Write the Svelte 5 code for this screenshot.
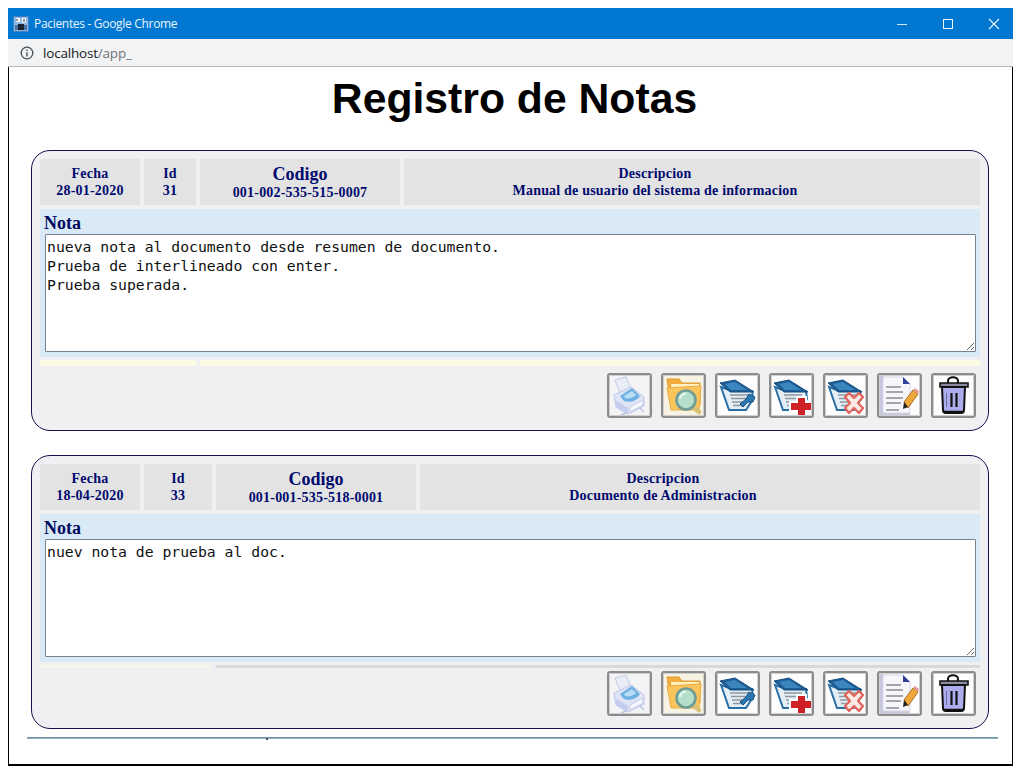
<script>
  const notas = [
    { cls: 'uno', fecha: '28-01-2020', id: '31', codigo: '001-002-535-515-0007', desc: 'Manual de usuario del sistema de informacion',
      texto: 'nueva nota al documento desde resumen de documento.\nPrueba de interlineado con enter.\nPrueba superada.' },
    { cls: 'dos', fecha: '18-04-2020', id: '33', codigo: '001-001-535-518-0001', desc: 'Documento de Administracion',
      texto: 'nuev nota de prueba al doc.' }
  ];
  const iconos = ['print', 'folder', 'book', 'add', 'del', 'doc', 'trash'];
</script>

{#snippet libro()}
  <path d="M4 12 L12 35 H29 L36 24 L35 16 L12 15 Z" fill="#e4eef6" stroke="#2a6ea6" stroke-width="2"/>
  <path d="M13 20 H31 M14 23.500 H30 M15 27 H27 M16 30.500 H25" stroke="#8f979f" stroke-width="1.500"/>
  <path d="M3 8 L18 5 L37 17 L13 17 Z" fill="#1c5f98" stroke="#174d7c"/>
  <path d="M8 9 L18 7 L30 15 L14 15 Z" fill="#3c86bf"/>
{/snippet}

{#snippet icono(tipo)}
  <svg viewBox="0 0 41 41" width="41" height="41">
    {#if tipo === 'print'}
      <path d="M6 5 L17 2 L22 14 L11 18 Z" fill="#e9edf8" stroke="#c4cce6"/>
      <path d="M5 20 L22 12 L35 22 L35 31 L19 39 L7 32 Z" fill="#dfe4f6" stroke="#bcc5e6"/>
      <path d="M11 21 L23 13 L31 21 C28 26 20 28 15 26 Z" fill="#6fb0e2"/>
      <path d="M15 21 L23 16 L27 20 C24 23 19 24 16 23 Z" fill="#b8dcf4"/>
      <path d="M6 25 L19 33 V39 L7 32 Z" fill="#c4cdee"/>
      <path d="M21 32 L34 25 V30 L21 37 Z" fill="#f6f8fd" stroke="#c6cde6"/>
      <path d="M17 38 L12 40 M31 33 L35 37" stroke="#b9c2e2" stroke-width="1.500"/>
    {:else if tipo === 'folder'}
      <path d="M4 4 H16 L19 8 H37 V30 H8 Z" fill="#f2ad3e" stroke="#dc9a2e"/>
      <path d="M8 9 H36 V18 H9 Z" fill="#fff0c0"/>
      <path d="M4 13 L38 11 L36 35 H8 Z" fill="#fbc55c" stroke="#e8ab42"/>
      <path d="M29 31 L36 37" stroke="#d8c078" stroke-width="4.500" stroke-linecap="round"/>
      <circle cx="23" cy="25" r="9.500" fill="#b5dfca" stroke="#6f9c94" stroke-width="2.600"/>
      <path d="M17 24 A6.500 6.500 0 0 1 23 18.500" fill="none" stroke="#e8f7ee" stroke-width="2"/>
    {:else if tipo === 'book'}
      {@render libro()}
      <path d="M23 29 L29 24 L32 19 L38 22 L36 27 L31 27 L26 32 Z" fill="#2b78b2" stroke="#174d7c"/>
    {:else if tipo === 'add'}
      {@render libro()}
      <path d="M25 21 H36 V26 H41 V37 H36 V41 H25 V37 H18 V26 H25 Z" fill="#fff"/>
      <path d="M27 23 H34 V28 H41 V35 H34 V41 H27 V35 H20 V28 H27 Z" fill="#cf1f27"/>
    {:else if tipo === 'del'}
      {@render libro()}
      <path d="M20 22 L24 18 L29 23 L34 18 L38 22 L33 28 L38 33 L34 38 L29 33 L24 38 L20 33 L25 28 Z" fill="#fbe9e5" stroke="#e0635a" stroke-width="2.200" stroke-linejoin="round"/>
    {:else if tipo === 'doc'}
      <path d="M0 0 H41 V41 H0 Z" fill="#fdfdfd"/>
      <path d="M0 0 H5 V36 H31 V41 H0 Z" fill="#c6c7dc"/>
      <path d="M4 2 H24 L31 9 V38 H4 Z" fill="#f7f7fb" stroke="#d4d5e4"/>
      <path d="M24 2 L31 9 H24 Z" fill="#2e3f9e"/>
      <path d="M7 12 H22 M7 17 H24 M7 23 H24 M7 28 H22 M7 35 H20" stroke="#8a8a92" stroke-width="1.500"/>
      <path d="M25 27 L34 15 L39 19 L29 33 Z" fill="#f0a83c" stroke="#a7701e"/>
      <path d="M34 15 L36 13 L40 16 L39 19 Z" fill="#eb9a9a"/>
      <path d="M24 34 L25 27 L29 32 Z" fill="#222"/>
    {:else}
      <path d="M15 8 V6 C15 1 25 1 25 6 V8" fill="none" stroke="#111" stroke-width="2"/>
      <path d="M7 8 H35 V12 H7 Z" fill="#8a8aa0" stroke="#111" stroke-width="1.600"/>
      <path d="M9 12 H32 L31 35 Q31 38 28 38 H13 Q10 38 10 35 Z" fill="#adadee" stroke="#111" stroke-width="2"/>
      <path d="M18.500 18 V32 M23.500 18 V32" stroke="#111" stroke-width="2.200"/>
      <path d="M13.500 18 V32" stroke="#6a6aa8" stroke-width="1"/>
      <path d="M11 37 H30" stroke="#111" stroke-width="2.500"/>
    {/if}
  </svg>
{/snippet}

<div class="ventana">
  <header class="titulo">
    <svg class="favicon" viewBox="0 0 16 16" width="16" height="16">
      <rect width="16" height="16" fill="#3f7fc4"/>
      <rect x="1" y="1" width="14" height="14" fill="#8db7e2"/>
      <path d="M3 2 H7 V6 H3 Z M9 2 H13 V7 H9 Z" fill="#f3f7fb"/>
      <path d="M4 3 V5 M11 3 V6" stroke="#263246"/>
      <path d="M2 9 H14 V14 H2 Z" fill="#4a6fa0"/>
      <path d="M5 8 H11 V14 H5 Z" fill="#1c2230"/>
    </svg>
    <span class="nombre">Pacientes - Google Chrome</span>
    <svg class="ctrl" viewBox="0 0 104 12" width="104" height="12">
      <path d="M1 6.500 H11" stroke="#cfe6f7"/>
      <rect x="47.500" y="1.500" width="9" height="9" fill="none" stroke="#eaf4fc"/>
      <path d="M93 1 L103 11 M103 1 L93 11" stroke="#eef6fc" stroke-width="1.100"/>
    </svg>
  </header>
  <div class="direccion">
    <svg viewBox="0 0 14 14" width="14" height="14">
      <circle cx="7" cy="7" r="5.800" fill="none" stroke="#4a4d51" stroke-width="1.300"/>
      <path d="M7 6.200 V10.500 M7 3.500 V5" stroke="#4a4d51" stroke-width="1.400"/>
    </svg>
    <span class="url">localhost<span class="ruta">/app_</span></span>
  </div>

  <main class="contenido">
    <h1>Registro de Notas</h1>
    {#each notas as n}
      <section class="tarjeta {n.cls}">
        <div class="cabecera">
          <div class="celda"><b>Fecha</b><b>{n.fecha}</b></div>
          <div class="celda"><b>Id</b><b>{n.id}</b></div>
          <div class="celda"><b class="grande">Codigo</b><b>{n.codigo}</b></div>
          <div class="celda desc"><b>Descripcion</b><b>{n.desc}</b></div>
        </div>
        <div class="nota">
          <div class="etiqueta">Nota</div>
          <textarea readonly value={n.texto}></textarea>
        </div>
        <div class="franja"><i></i><i></i></div>
        <div class="botones">
          {#each iconos as ic}
            <button class="boton {ic}" type="button" aria-label={ic}>{@render icono(ic)}</button>
          {/each}
        </div>
      </section>
    {/each}
    <div class="regla"></div>
  </main>
</div>

<style>
  :global(body) { margin: 0; background: #fff; }
  .ventana {
    box-sizing: border-box;
    width: 1005px;
    height: 758px;
    margin: 8px 0 0 8px;
    border-bottom: 2px solid #000;
    display: flex;
    flex-direction: column;
  }
  .titulo {
    height: 31px;
    background: #0078d2;
    display: flex;
    align-items: center;
    padding: 0 13px 0 5px;
    flex: none;
  }
  .nombre {
    font: 12px "Open Sans", "Noto Sans", sans-serif;
    color: #eaf4fc;
    margin-left: 5px;
    letter-spacing: -0.31px;
  }
  .ctrl { margin-left: auto; }
  .direccion {
    box-sizing: border-box;
    height: 28px;
    background: #f1f3f5;
    border-bottom: 1px solid #b4b6b8;
    display: flex;
    align-items: center;
    padding-left: 12px;
    flex: none;
  }
  .url {
    font: 13.500px "Open Sans", "Noto Sans", sans-serif;
    color: #202124;
    margin-left: 9px;
    letter-spacing: -0.2px;
  }
  .ruta { color: #6f7276; }
  .contenido {
    flex: 1;
    border-left: 1px solid #000;
    border-right: 1px solid #000;
    padding: 0 23px 0 22px;
    min-height: 0;
  }
  h1 {
    font: bold 42.700px "Liberation Sans", Arial, sans-serif;
    color: #000;
    text-align: center;
    margin: 0;
    height: 83px;
    line-height: 62px;
    padding-left: 9px;
    box-sizing: border-box;
  }
  .tarjeta {
    box-sizing: border-box;
    width: 958px;
    background: #f0f0f2;
    border: 1px solid #15104f;
    border-radius: 19px;
    padding: 8px 8px 0;
    margin-bottom: 24px;
  }
  .tarjeta.uno { height: 281px; }
  .tarjeta.dos { height: 274px; margin-bottom: 8px; }
  .cabecera, .franja { display: grid; column-gap: 4px; }
  .uno .cabecera { grid-template-columns: 100px 52px 200px 1fr; }
  .dos .cabecera { grid-template-columns: 100px 68px 200px 1fr; }
  .uno .franja { grid-template-columns: 156px 1fr; height: 6px; }
  .dos .franja { grid-template-columns: 172px 1fr; height: 3px; }
  .celda {
    height: 46px;
    background: #e3e3e3;
    color: #000a6e;
    display: flex;
    flex-direction: column;
    align-items: center;
    justify-content: center;
    font: bold 14px/17px "Liberation Serif", "Times New Roman", serif;
    letter-spacing: 0.2px;
  }
  .celda.desc { padding-right: 74px; }
  .grande { font-size: 18px; line-height: 20px; letter-spacing: 0; }
  .nota {
    background: #d9e9f5;
    margin-top: 4px;
    padding: 0 4px 5px 5px;
  }
  .etiqueta {
    height: 25px;
    font: bold 18px/29px "Liberation Serif", "Times New Roman", serif;
    color: #000a5e;
    margin-left: -1px;
  }
  textarea {
    display: block;
    box-sizing: border-box;
    width: 931px;
    height: 118px;
    margin: 0;
    padding: 2px 2px 2px 1px;
    border: 1px solid #76838f;
    border-radius: 1px;
    background: #fff;
    color: #111;
    font: 14.760px/19px "DejaVu Sans Mono", monospace;
    outline: none;
  }
  .franja { margin-top: 3px; }
  .uno .franja i { background: #fbfbe3; }
  .dos .franja i:first-child { background: #f8f6ea; }
  .dos .franja i:last-child { background: #dcd8d8; }
  .botones {
    display: flex;
    justify-content: flex-end;
    gap: 9px;
    padding-right: 4px;
  }
  .uno .botones { margin-top: 7px; }
  .dos .botones { margin-top: 3px; }
  .boton {
    box-sizing: border-box;
    width: 45px;
    height: 45px;
    padding: 0;
    background: #fdfdfd;
    border: 2px solid #8c8c8c;
    border-radius: 3px;
    outline: 1px solid #cfcfcf;
    outline-offset: -3px;
    overflow: hidden;
    display: block;
  }
  .boton.print { background: #f4f4f6; }
  .boton.folder { background: #f8f2e2; }
  .boton svg { display: block; }
  .regla {
    position: relative;
    width: 971px;
    height: 2px;
    margin-left: -4px;
    background: linear-gradient(#5f8ca3, #9db6c4);
  }
  .regla::after {
    content: "";
    position: absolute;
    left: 239px;
    top: 1px;
    width: 2px;
    height: 2px;
    background: #555;
  }
</style>
